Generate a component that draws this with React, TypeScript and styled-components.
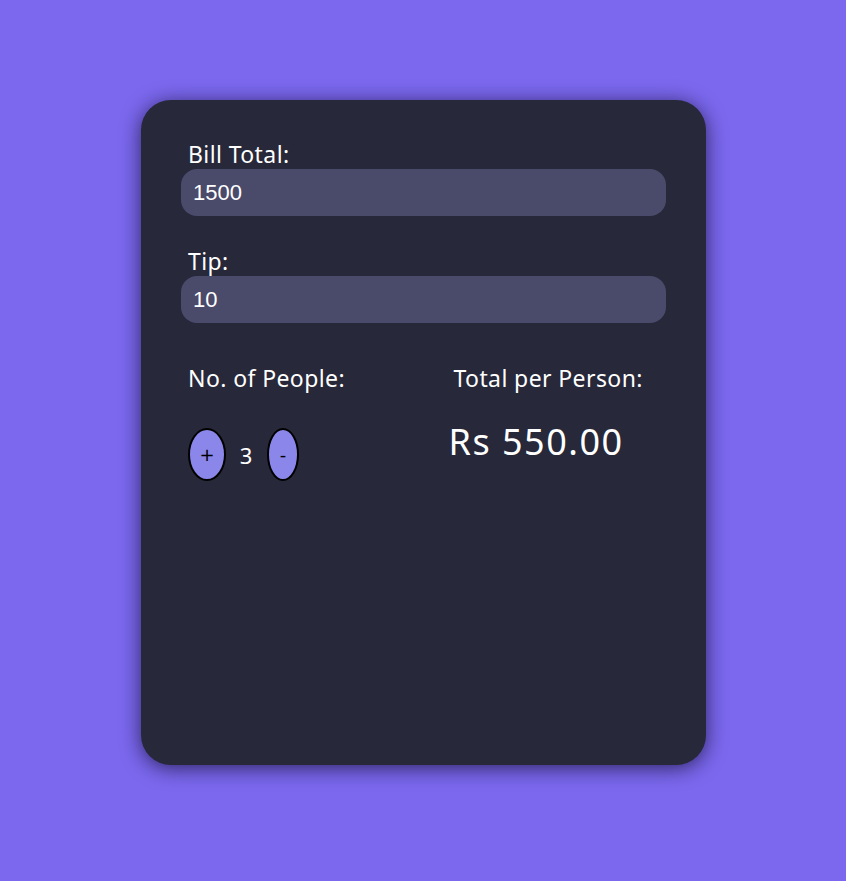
import React, { useState } from "react";
import styled, { createGlobalStyle } from "styled-components";

const Global = createGlobalStyle`
  html, body { margin: 0; padding: 0; }
  body { background: #7b68ee; font-family: "Noto Sans", sans-serif; }
`;

const Page = styled.div`
  min-height: 881px;
  padding-top: 100px;
  box-sizing: border-box;
  display: flex;
  justify-content: center;
`;

const Card = styled.div`
  width: 565px;
  height: 665px;
  margin-left: 1px;
  box-sizing: border-box;
  background: #272839;
  border-radius: 30px;
  box-shadow: 0 3px 20px rgba(20, 14, 50, 0.75);
  padding: 39px 40px 40px;
  color: #fff;
`;

const Field = styled.div`
  display: flex;
  flex-direction: column;
  margin-bottom: 30px;
`;

const Label = styled.label<{ $indent?: number }>`
  font-size: 23px;
  letter-spacing: 0.4px;
  line-height: 30px;
  padding-left: ${(p) => (p.$indent ?? 7)}px;
  color: #fff;
`;

const Input = styled.input`
  height: 47px;
  box-sizing: border-box;
  border: none;
  outline: none;
  border-radius: 16px;
  background: #4a4a6b;
  color: #fff;
  font-family: "Liberation Sans", Arial, sans-serif;
  font-size: 22px;
  padding: 0 12px;
`;

const Row = styled.div`
  display: grid;
  grid-template-columns: 1fr 1fr;
  margin-top: 40px;
`;

const Col = styled.div<{ $right?: boolean }>`
  display: flex;
  flex-direction: column;
  padding-left: ${(p) => (p.$right ? "25px" : "7px")};
`;

const Counter = styled.div`
  display: flex;
  align-items: center;
  gap: 12px;
  margin-top: 35px;
`;

const RoundBtn = styled.button<{ $w: number }>`
  width: ${(p) => p.$w}px;
  height: 53px;
  border-radius: 50%;
  border: 2px solid #000;
  background: #8a86ea;
  color: #000;
  font-family: "DejaVu Sans", sans-serif;
  font-size: 18px;
  padding: 0;
  display: flex;
  align-items: center;
  justify-content: center;
`;

const Count = styled.span`
  font-size: 22px;
  width: 18px;
  text-align: center;
  margin: 0 0 0 -1px;
`;

const Amount = styled.div`
  font-size: 36px;
  letter-spacing: 1.5px;
  margin-top: 24px;
`;

export default function App() {
  const [bill, setBill] = useState("1500");
  const [tip, setTip] = useState("10");
  const [people, setPeople] = useState(3);
  const b = parseFloat(bill) || 0;
  const t = parseFloat(tip) || 0;
  const per = (b * (1 + t / 100)) / people;
  return (
    <>
      <Global />
      <Page>
        <Card>
          <Field>
            <Label>Bill Total:</Label>
            <Input value={bill} onChange={(e) => setBill(e.target.value)} />
          </Field>
          <Field>
            <Label>Tip:</Label>
            <Input value={tip} onChange={(e) => setTip(e.target.value)} />
          </Field>
          <Row>
            <Col>
              <Label as="div" $indent={0}>No. of People:</Label>
              <Counter>
                <RoundBtn $w={38} onClick={() => setPeople(people + 1)}>+</RoundBtn>
                <Count>{people}</Count>
                <RoundBtn $w={32} onClick={() => setPeople(Math.max(1, people - 1))}>-</RoundBtn>
              </Counter>
            </Col>
            <Col $right>
              <Label as="div" $indent={5}>Total per Person:</Label>
              <Amount>Rs {per.toFixed(2)}</Amount>
            </Col>
          </Row>
        </Card>
      </Page>
    </>
  );
}
